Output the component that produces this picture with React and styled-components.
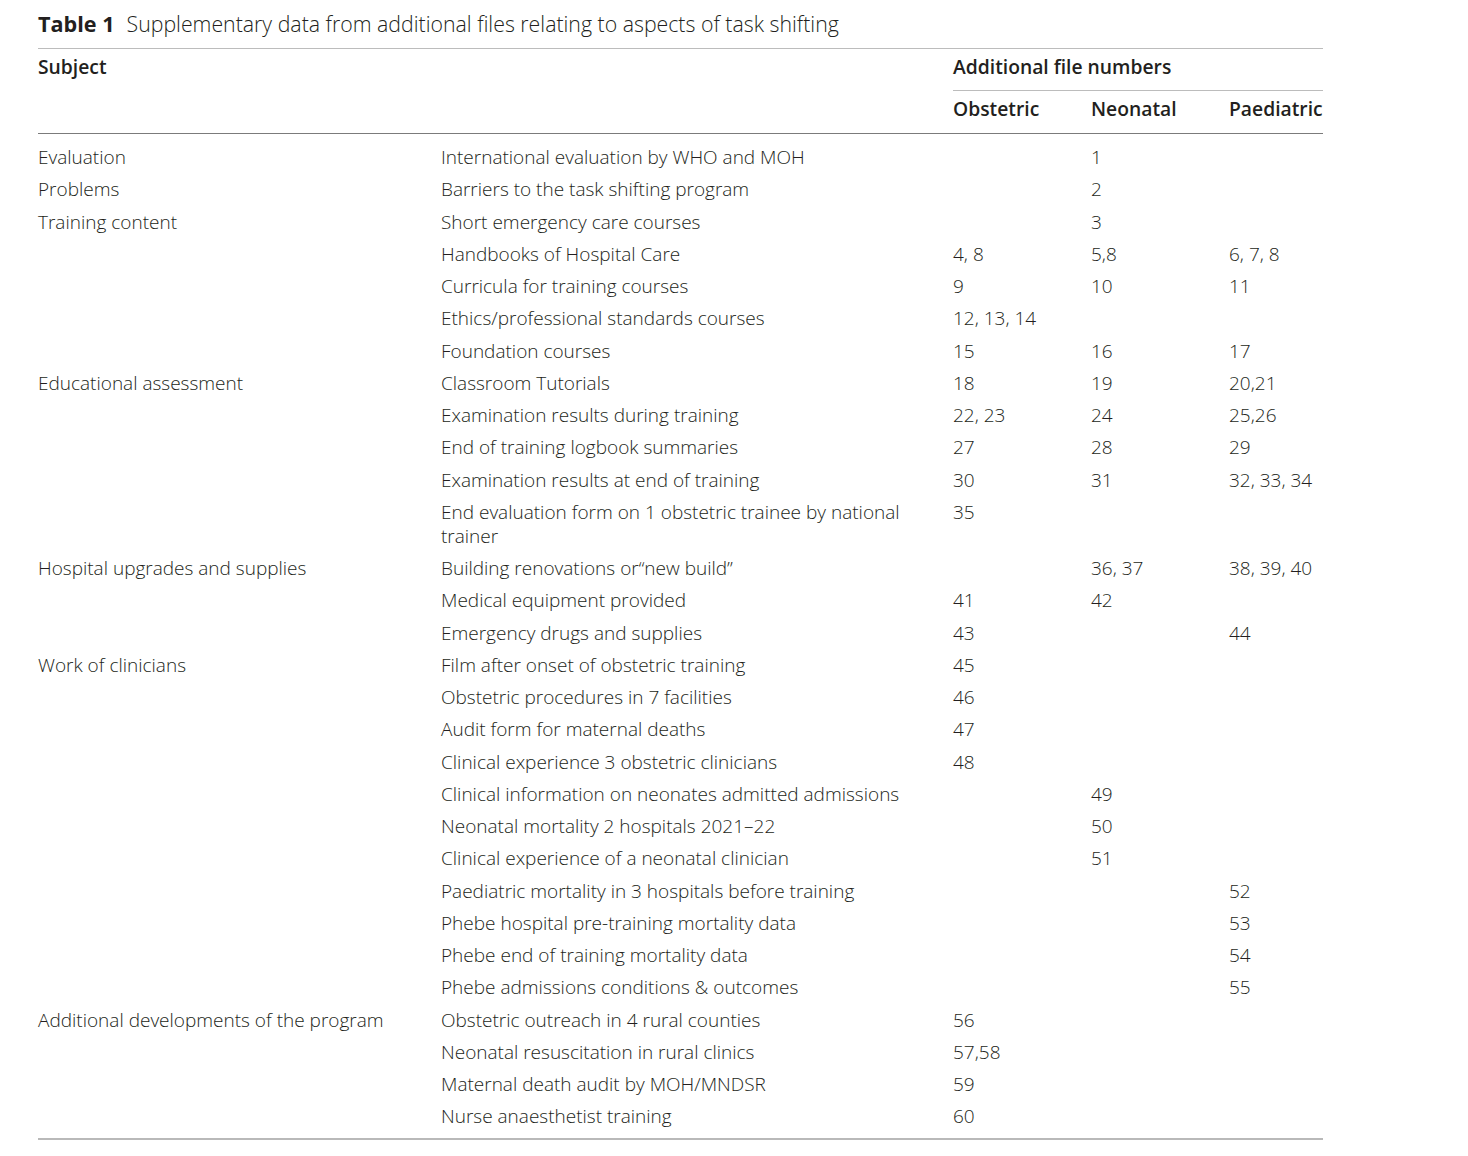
import React from "react";
import styled, { createGlobalStyle } from "styled-components";

const rows = [
  ["Evaluation", "International evaluation by WHO and MOH", "", "1", ""],
  ["Problems", "Barriers to the task shifting program", "", "2", ""],
  ["Training content", "Short emergency care courses", "", "3", ""],
  ["", "Handbooks of Hospital Care", "4, 8", "5,8", "6, 7, 8"],
  ["", "Curricula for training courses", "9", "10", "11"],
  ["", "Ethics/professional standards courses", "12, 13, 14", "", ""],
  ["", "Foundation courses", "15", "16", "17"],
  ["Educational assessment", "Classroom Tutorials", "18", "19", "20,21"],
  ["", "Examination results during training", "22, 23", "24", "25,26"],
  ["", "End of training logbook summaries", "27", "28", "29"],
  ["", "Examination results at end of training", "30", "31", "32, 33, 34"],
  ["", "End evaluation form on 1 obstetric trainee by national trainer", "35", "", ""],
  ["Hospital upgrades and supplies", "Building renovations or\u201Cnew build\u201D", "", "36, 37", "38, 39, 40"],
  ["", "Medical equipment provided", "41", "42", ""],
  ["", "Emergency drugs and supplies", "43", "", "44"],
  ["Work of clinicians", "Film after onset of obstetric training", "45", "", ""],
  ["", "Obstetric procedures in 7 facilities", "46", "", ""],
  ["", "Audit form for maternal deaths", "47", "", ""],
  ["", "Clinical experience 3 obstetric clinicians", "48", "", ""],
  ["", "Clinical information on neonates admitted admissions", "", "49", ""],
  ["", "Neonatal mortality 2 hospitals 2021\u201322", "", "50", ""],
  ["", "Clinical experience of a neonatal clinician", "", "51", ""],
  ["", "Paediatric mortality in 3 hospitals before training", "", "", "52"],
  ["", "Phebe hospital pre-training mortality data", "", "", "53"],
  ["", "Phebe end of training mortality data", "", "", "54"],
  ["", "Phebe admissions conditions & outcomes", "", "", "55"],
  ["Additional developments of the program", "Obstetric outreach in 4 rural counties", "56", "", ""],
  ["", "Neonatal resuscitation in rural clinics", "57,58", "", ""],
  ["", "Maternal death audit by MOH/MNDSR", "59", "", ""],
  ["", "Nurse anaesthetist training", "60", "", ""],
];

const Global = createGlobalStyle`
  body {
    margin: 0;
    background: #ffffff;
    color: #231f20;
    font-family: "Open Sans", "Noto Sans", sans-serif;
  }
`;

const Page = styled.div`
  padding: 9px 0 0 38px;
  width: 1285px;
`;

const Caption = styled.div`
  font-size: 21.3px;
  font-weight: 300;
  line-height: 30px;
  padding-bottom: 9px;
  border-bottom: 1px solid #bcbcbc;
  white-space: nowrap;
`;

const Label = styled.span`
  font-weight: 700;
  font-size: 21.6px;
  margin-right: 12px;
`;

const Table = styled.table`
  width: 100%;
  border-collapse: collapse;
  table-layout: fixed;
  font-size: 19px;
  font-weight: 300;
  line-height: 24px;
`;

const Th = styled.th`
  text-align: left;
  font-weight: 600;
  font-size: 19.3px;
  padding: ${(p) => (p.$top ? "6px 0 12px" : "6px 0 11px")};
  vertical-align: top;
  border-bottom: ${(p) => (p.$rule === "dark" ? "1px solid #7b7b7b" : p.$rule === "light" ? "1px solid #bcbcbc" : "none")};
`;

const Td = styled.td`
  padding: ${(p) => (p.$first ? "11px" : "4px")} ${(p) => (p.$wrap ? "30px" : "0")} ${(p) => (p.$last ? "10px" : "4.25px")} 0;
  vertical-align: top;
`;

const Tr = styled.tr`
  border-bottom: ${(p) => (p.$last ? "2px solid #b9b9b9" : "none")};
`;

export default function App() {
  return (
    <>
      <Global />
      <Page>
        <Caption>
          <Label>Table 1</Label>Supplementary data from additional files relating to aspects of task shifting
        </Caption>
        <Table>
          <colgroup>
            <col style={{ width: 403 }} />
            <col style={{ width: 512 }} />
            <col style={{ width: 138 }} />
            <col style={{ width: 138 }} />
            <col style={{ width: 94 }} />
          </colgroup>
          <thead>
            <tr>
              <Th rowSpan={2} colSpan={2} $rule="dark">Subject</Th>
              <Th colSpan={3} $rule="light">Additional file numbers</Th>
            </tr>
            <tr>
              <Th $top $rule="dark">Obstetric</Th>
              <Th $top $rule="dark">Neonatal</Th>
              <Th $top $rule="dark">Paediatric</Th>
            </tr>
          </thead>
          <tbody>
            {rows.map((r, i) => (
              <Tr key={i} $last={i === rows.length - 1}>
                {r.map((c, j) => (
                  <Td key={j} $first={i === 0} $last={i === rows.length - 1} $wrap={j === 1}>
                    {c}
                  </Td>
                ))}
              </Tr>
            ))}
          </tbody>
        </Table>
      </Page>
    </>
  );
}
